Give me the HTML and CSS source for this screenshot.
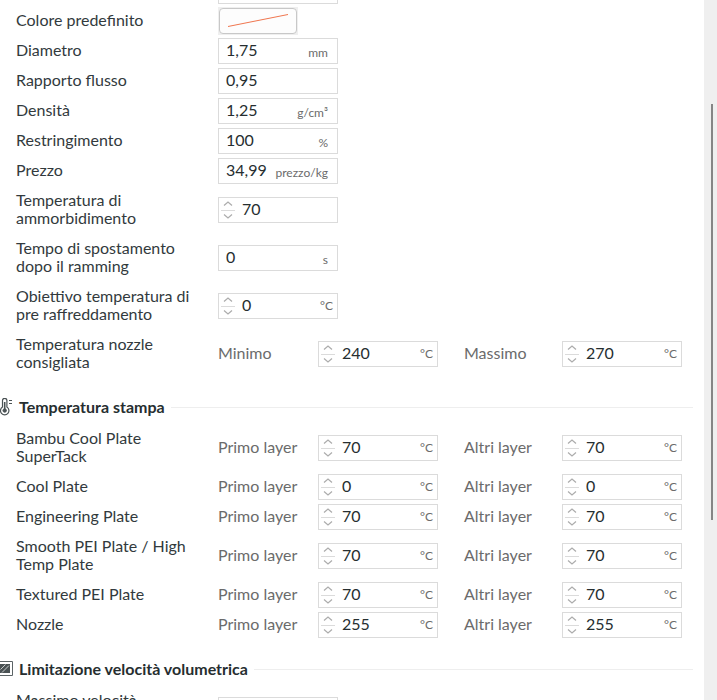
FILE: index.html
```html
<!DOCTYPE html>
<html lang="it">
  <head>
    <meta charset="utf-8">
    <title>Impostazioni filamento</title>
    <link rel="stylesheet" href="styles.css">
  </head>
  <body>
    <main class="panel">
      <section class="rows first">
        <div class="row">
          <span></span>
          <div class="field"><input type="text" aria-label="Valore"></div>
        </div>
        <div class="row">
          <label for="color">Colore predefinito</label>
          <div class="swatch">
            <button id="color" type="button">
              <svg width="76" height="24" viewBox="0 0 76 24"><path d="M8 17.500 68 5.500" stroke="#f0764f" fill="none"/></svg>
            </button>
          </div>
        </div>
        <div class="row">
          <label for="diameter">Diametro</label>
          <div class="field"><input id="diameter" type="text" value="1,75"><span class="unit">mm</span></div>
        </div>
        <div class="row">
          <label for="flow">Rapporto flusso</label>
          <div class="field"><input id="flow" type="text" value="0,95"></div>
        </div>
        <div class="row">
          <label for="density">Densità</label>
          <div class="field"><input id="density" type="text" value="1,25"><span class="unit">g/cm³</span></div>
        </div>
        <div class="row">
          <label for="shrink">Restringimento</label>
          <div class="field"><input id="shrink" type="text" value="100"><span class="unit">%</span></div>
        </div>
        <div class="row">
          <label for="price">Prezzo</label>
          <div class="field"><input id="price" type="text" value="34,99"><span class="unit">prezzo/kg</span></div>
        </div>
        <div class="row">
          <label for="soft">Temperatura di ammorbidimento</label>
          <div class="field spin"><input id="soft" type="text" value="70"></div>
        </div>
        <div class="row">
          <label for="ramming">Tempo di spostamento dopo il ramming</label>
          <div class="field"><input id="ramming" type="text" value="0"><span class="unit">s</span></div>
        </div>
        <div class="row">
          <label for="precool">Obiettivo temperatura di pre raffreddamento</label>
          <div class="field spin"><input id="precool" type="text" value="0"><span class="unit">°C</span></div>
        </div>
        <div class="row pair">
          <span>Temperatura nozzle consigliata</span>
          <label class="sub" for="min">Minimo</label>
          <div class="field spin"><input id="min" type="text" value="240"><span class="unit">°C</span></div>
          <label class="sub" for="max">Massimo</label>
          <div class="field spin"><input id="max" type="text" value="270"><span class="unit">°C</span></div>
        </div>
      </section>

      <h2 class="title">
        <svg width="13" height="18" viewBox="0 0 13 18" fill="none" stroke="#4a5254">
          <path d="M2.500 9V2.500a2.200 2.200 0 0 1 4.400 0V9a4.200 4.200 0 1 1-4.400 0z" stroke-width="1.200"/>
          <path d="M4.700 4v8" stroke-width="1.600"/>
          <circle cx="4.700" cy="12.500" r="1.700" fill="#4a5254"/>
          <path d="M9 2.500h3M9 5.500h3" stroke-width="1.200"/>
        </svg>
        Temperatura stampa
      </h2>
      <section class="rows">
        <div class="row pair">
          <span>Bambu Cool Plate SuperTack</span>
          <label class="sub" for="st1">Primo layer</label>
          <div class="field spin"><input id="st1" type="text" value="70"><span class="unit">°C</span></div>
          <label class="sub" for="st2">Altri layer</label>
          <div class="field spin"><input id="st2" type="text" value="70"><span class="unit">°C</span></div>
        </div>
        <div class="row pair">
          <span>Cool Plate</span>
          <label class="sub" for="cp1">Primo layer</label>
          <div class="field spin"><input id="cp1" type="text" value="0"><span class="unit">°C</span></div>
          <label class="sub" for="cp2">Altri layer</label>
          <div class="field spin"><input id="cp2" type="text" value="0"><span class="unit">°C</span></div>
        </div>
        <div class="row pair">
          <span>Engineering Plate</span>
          <label class="sub" for="ep1">Primo layer</label>
          <div class="field spin"><input id="ep1" type="text" value="70"><span class="unit">°C</span></div>
          <label class="sub" for="ep2">Altri layer</label>
          <div class="field spin"><input id="ep2" type="text" value="70"><span class="unit">°C</span></div>
        </div>
        <div class="row pair">
          <span>Smooth PEI Plate / High Temp Plate</span>
          <label class="sub" for="sp1">Primo layer</label>
          <div class="field spin"><input id="sp1" type="text" value="70"><span class="unit">°C</span></div>
          <label class="sub" for="sp2">Altri layer</label>
          <div class="field spin"><input id="sp2" type="text" value="70"><span class="unit">°C</span></div>
        </div>
        <div class="row pair">
          <span>Textured PEI Plate</span>
          <label class="sub" for="tp1">Primo layer</label>
          <div class="field spin"><input id="tp1" type="text" value="70"><span class="unit">°C</span></div>
          <label class="sub" for="tp2">Altri layer</label>
          <div class="field spin"><input id="tp2" type="text" value="70"><span class="unit">°C</span></div>
        </div>
        <div class="row pair">
          <span>Nozzle</span>
          <label class="sub" for="nz1">Primo layer</label>
          <div class="field spin"><input id="nz1" type="text" value="255"><span class="unit">°C</span></div>
          <label class="sub" for="nz2">Altri layer</label>
          <div class="field spin"><input id="nz2" type="text" value="255"><span class="unit">°C</span></div>
        </div>
      </section>

      <h2 class="title">
        <svg width="13" height="18" viewBox="0 0 13 18" fill="none">
          <path d="M-2.500 1.500h15v14h-15z" stroke="#5c6466"/>
          <path d="M0 4h10v9H0z" fill="#4a5254"/>
          <path d="M.5 9.500 5.500 4.500M2 12.500 9 5.500" stroke="#c8cccc"/>
        </svg>
        Limitazione velocità volumetrica
      </h2>
      <section class="rows">
        <div class="row">
          <label for="speed">Massimo velocità volumetrica</label>
          <div class="field"><input id="speed" type="text"></div>
        </div>
      </section>
    </main>
    <div class="scrollbar"><div class="thumb"></div></div>

    <script>
      // every spin field gets the same up / down buttons
      var arrows = { Aumenta: 'M1 5.500 5 2 9 5.500', Diminuisci: 'M1 2.500 5 6 9 2.500' };
      document.querySelectorAll('.spin').forEach(function(field) {
        var box = document.createElement('div');
        box.className = 'arrows';
        for (var name in arrows) {
          box.innerHTML += '<button type="button" aria-label="' + name + '"><svg width="10" height="8" viewBox="0 0 10 8"><path d="' + arrows[name] + '"/></svg></button>';
        }
        field.prepend(box);
      });
    </script>
  </body>
</html>
```
FILE: styles.css
```css
* { box-sizing: border-box; }
body { margin: 0; height: 100vh; display: flex; overflow: hidden; background: #fff; color: #323a3d; font: 16px/18px Lato, "Liberation Sans", sans-serif; }
input, button { font: inherit; color: inherit; margin: 0; padding: 0; border: none; background: none; }

.panel { flex: 1; min-width: 0; overflow: hidden; }
.rows { padding-left: 16px; }
.rows.first { margin-top: -24px; }
.row { display: grid; grid-template-columns: 176px 120px; column-gap: 26px; align-items: center; padding: 5px 0 7px; }
.row.pair { grid-template-columns: 176px 74px 120px 72px 120px; }
.sub { color: #6b6b6b; white-space: nowrap; }

/* taller than the text line, so it reaches into the row padding */
.field { display: flex; align-items: center; height: 26px; margin: -3px 0 -5px; padding: 0 9px 0 7px; border: 1px solid #dbdbdb; background: #fff; color: #262e30; }
.field input { flex: 1; width: 0; min-width: 0; height: 24px; padding-bottom: 3px; outline: none; }
.field.spin { padding: 0 4px 0 2px; }
.unit { padding-top: 4px; color: #6b6b6b; font-size: 12px; }
.spin .unit { padding-top: 0; }

.arrows { display: flex; flex-direction: column; width: 14px; margin-right: 7px; }
.arrows button { display: flex; justify-content: center; align-items: center; height: 11px; }
.arrows button + button { height: 12px; border-top: 1px solid #dbdbdb; }
.arrows path { fill: none; stroke: #acacac; stroke-width: 1.2; }

.swatch { width: 80px; margin: -4px 0 -6px; padding: 1px; background: #efefef; }
.swatch button { display: block; width: 78px; height: 26px; border: 1px solid #c8c8c8; border-radius: 4px; background: #fdfdfd; }
.swatch svg { display: block; }

.title { display: flex; align-items: center; gap: 6px; margin: 20px 11px 8px 0; font-size: 16px; line-height: 18px; font-weight: bold; color: #262e30; }
.title::after { content: ""; flex: 1; height: 1px; background: #eee; }

.scrollbar { display: grid; grid-template-rows: 104fr 416fr 180fr; width: 13px; background: #efefef; }
.thumb { grid-row: 2; justify-self: end; width: 2px; margin-right: 4px; background: #858585; }
```
